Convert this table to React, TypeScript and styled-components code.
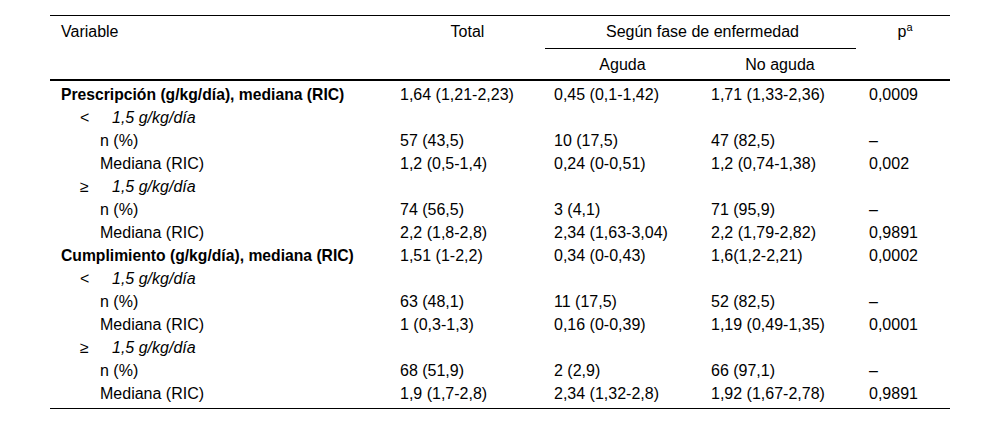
import React from "react";
import styled, { createGlobalStyle } from "styled-components";

const GlobalStyle = createGlobalStyle`
    body {
        margin: 0;
        background: #ffffff;
        font-family: "Liberation Sans", Arial, sans-serif;
        color: #000000;
    }
`;

type Level = "main" | "group" | "item";

type Row = {
    level: Level;
    label: string;
    sign?: string;
    total?: string;
    aguda?: string;
    noAguda?: string;
    p?: string;
};

const rows: Row[] = [
    { level: "main", label: "Prescripción (g/kg/día), mediana (RIC)", total: "1,64 (1,21-2,23)", aguda: "0,45 (0,1-1,42)", noAguda: "1,71 (1,33-2,36)", p: "0,0009" },
    { level: "group", sign: "<", label: "1,5 g/kg/día" },
    { level: "item", label: "n (%)", total: "57 (43,5)", aguda: "10 (17,5)", noAguda: "47 (82,5)", p: "–" },
    { level: "item", label: "Mediana (RIC)", total: "1,2 (0,5-1,4)", aguda: "0,24 (0-0,51)", noAguda: "1,2 (0,74-1,38)", p: "0,002" },
    { level: "group", sign: "≥", label: "1,5 g/kg/día" },
    { level: "item", label: "n (%)", total: "74 (56,5)", aguda: "3 (4,1)", noAguda: "71 (95,9)", p: "–" },
    { level: "item", label: "Mediana (RIC)", total: "2,2 (1,8-2,8)", aguda: "2,34 (1,63-3,04)", noAguda: "2,2 (1,79-2,82)", p: "0,9891" },
    { level: "main", label: "Cumplimiento (g/kg/día), mediana (RIC)", total: "1,51 (1-2,2)", aguda: "0,34 (0-0,43)", noAguda: "1,6(1,2-2,21)", p: "0,0002" },
    { level: "group", sign: "<", label: "1,5 g/kg/día" },
    { level: "item", label: "n (%)", total: "63 (48,1)", aguda: "11 (17,5)", noAguda: "52 (82,5)", p: "–" },
    { level: "item", label: "Mediana (RIC)", total: "1 (0,3-1,3)", aguda: "0,16 (0-0,39)", noAguda: "1,19 (0,49-1,35)", p: "0,0001" },
    { level: "group", sign: "≥", label: "1,5 g/kg/día" },
    { level: "item", label: "n (%)", total: "68 (51,9)", aguda: "2 (2,9)", noAguda: "66 (97,1)", p: "–" },
    { level: "item", label: "Mediana (RIC)", total: "1,9 (1,7-2,8)", aguda: "2,34 (1,32-2,8)", noAguda: "1,92 (1,67-2,78)", p: "0,9891" },
];

function App() {
    return (
        <>
            <GlobalStyle />
            <Page>
                <Table>
                    <colgroup>
                        <Col $w={340} />
                        <Col $w={154} />
                        <Col $w={157} />
                        <Col $w={158} />
                        <Col $w={91} />
                    </colgroup>
                    <thead>
                        <tr>
                            <HeadCell rowSpan={2} $align="left">Variable</HeadCell>
                            <HeadCell rowSpan={2}>Total</HeadCell>
                            <SpanCell colSpan={2}>
                                <SpanLabel>Según fase de enfermedad</SpanLabel>
                            </SpanCell>
                            <HeadCell rowSpan={2}>
                                p<Sup>a</Sup>
                            </HeadCell>
                        </tr>
                        <tr>
                            <SubHeadCell>Aguda</SubHeadCell>
                            <SubHeadCell>No aguda</SubHeadCell>
                        </tr>
                    </thead>
                    <Body>
                        {rows.map((r, i) => (
                            <tr key={i}>
                                <LabelCell $level={r.level}>
                                    {r.sign && <Sign>{r.sign}</Sign>}
                                    {r.label}
                                </LabelCell>
                                <Cell>{r.total}</Cell>
                                <Cell>{r.aguda}</Cell>
                                <Cell>{r.noAguda}</Cell>
                                <Cell>{r.p}</Cell>
                            </tr>
                        ))}
                    </Body>
                </Table>
            </Page>
        </>
    );
}

const Page = styled.div`
    padding: 15px 50px 0 50px;
`;

const Table = styled.table`
    width: 900px;
    border-collapse: collapse;
    table-layout: fixed;
    font-size: 16px;
    line-height: 19px;
    border-top: 1px solid #000;
    border-bottom: 1px solid #000;
`;

const Col = styled.col<{ $w: number }>`
    width: ${(p) => p.$w}px;
`;

const HeadCell = styled.th<{ $align?: string }>`
    font-weight: normal;
    text-align: ${(p) => p.$align || "center"};
    vertical-align: top;
    padding: 6px 10px 0 11px;
    border-bottom: 2px solid #000;
`;

const SpanCell = styled.th`
    font-weight: normal;
    padding: 6px 3px 0 1px;
    vertical-align: top;
`;

const SpanLabel = styled.div`
    text-align: center;
    padding: 0 0 7px 4px;
    border-bottom: 1px solid #000;
`;

const Sup = styled.sup`
    font-size: 11px;
    line-height: 0;
    vertical-align: 6px;
`;

const SubHeadCell = styled.th`
    font-weight: normal;
    text-align: center;
    padding: 6px 10px 5px 10px;
    border-bottom: 2px solid #000;
`;

const Body = styled.tbody`
    tr:first-child td {
        padding-top: 4px;
    }
    tr:last-child td {
        padding-bottom: 5px;
    }
`;

const Cell = styled.td`
    padding: 2px 10px;
    white-space: nowrap;
`;

const LabelCell = styled.td<{ $level: Level }>`
    padding: 2px 10px 2px ${(p) => (p.$level === "main" ? 11 : p.$level === "group" ? 30 : 50)}px;
    font-weight: ${(p) => (p.$level === "main" ? "bold" : "normal")};
    font-size: ${(p) => (p.$level === "main" ? "15.7px" : "16px")};
    font-style: ${(p) => (p.$level === "group" ? "italic" : "normal")};
    white-space: nowrap;
`;

const Sign = styled.span`
    display: inline-block;
    width: 32px;
    font-style: normal;
`;

export default App;
